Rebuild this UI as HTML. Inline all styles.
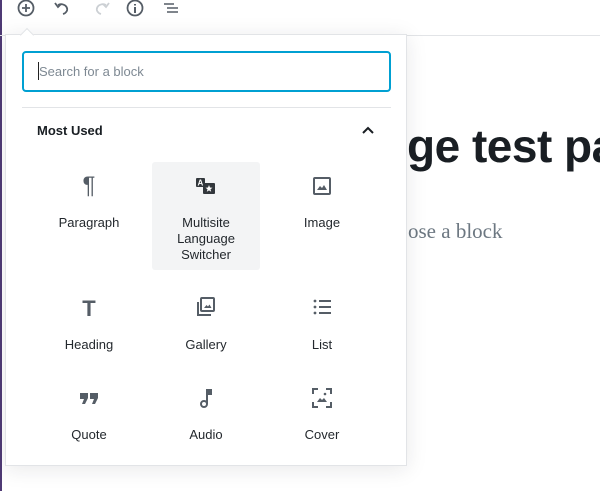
<!DOCTYPE html>
<html><head><style>
*{box-sizing:border-box;margin:0;padding:0}
body{width:600px;height:491px;overflow:hidden;background:#fff;font-family:"Liberation Sans",sans-serif;position:relative;color:#1e1e1e}
.abs{position:absolute}
.lbl{position:absolute;width:108px;text-align:center;font-size:13px;color:#23282d;line-height:16px}
.ic{position:absolute}
</style></head><body>
<div class="abs" style="left:0;top:0;width:2px;height:491px;background:#4f3a75"></div>
<div class="abs" style="left:0;top:35px;width:600px;height:1px;background:#e2e4e7"></div>
<!-- toolbar icons -->
<svg class="ic" style="left:16px;top:0" width="20" height="18" viewBox="0 0 20 18"><circle cx="10" cy="8" r="7.5" fill="none" stroke="#555d66" stroke-width="1.8"/><path d="M10 4v8M6 8h8" stroke="#555d66" stroke-width="1.8"/></svg>
<svg class="ic" style="left:54px;top:0" width="20" height="18" viewBox="0 0 20 18"><path d="M4 5 A6 5 0 1 1 9 14" fill="none" stroke="#555d66" stroke-width="1.8"/><path d="M1 3l3 4 3-3" fill="none" stroke="#555d66" stroke-width="1.8"/></svg>
<svg class="ic" style="left:90px;top:0" width="20" height="18" viewBox="0 0 20 18"><path d="M16 5 A6 5 0 1 0 11 14" fill="none" stroke="#ccd0d4" stroke-width="1.8"/><path d="M19 3l-3 4-3-3" fill="none" stroke="#ccd0d4" stroke-width="1.8"/></svg>
<svg class="ic" style="left:125px;top:0" width="20" height="18" viewBox="0 0 20 18"><circle cx="10" cy="8" r="7.5" fill="none" stroke="#555d66" stroke-width="1.8"/><path d="M10 7v6M10 4v1.5" stroke="#555d66" stroke-width="2"/></svg>
<svg class="ic" style="left:162px;top:0" width="20" height="18" viewBox="0 0 20 18"><path d="M2 4h10M5 8h11M5 12h11" stroke="#555d66" stroke-width="1.6"/></svg>
<!-- page content -->
<div class="abs" style="left:407px;top:119px;font-size:46px;font-weight:bold;color:#191e23;white-space:nowrap;letter-spacing:-0.5px">ge test pa</div>
<div class="abs" style="left:408px;top:219px;font-size:21px;font-family:'Liberation Serif',serif;color:#6c7781;white-space:nowrap">ose a block</div>
<!-- panel -->
<div class="abs" style="left:5px;top:34px;width:402px;height:432px;background:#fff;border:1px solid #e2e4e7;box-shadow:0 3px 20px rgba(25,30,35,.1)"></div>
<div class="abs" style="left:22px;top:30px;width:10px;height:10px;background:#fff;border-left:1px solid #e2e4e7;border-top:1px solid #e2e4e7;transform:rotate(45deg)"></div>
<div class="abs" style="left:22px;top:51px;width:369px;height:41px;border:2px solid #00a0d2;border-radius:4px"></div>
<div class="abs" style="left:38px;top:62px;width:1px;height:18px;background:#222"></div>
<div class="abs" style="left:39px;top:64px;font-size:13px;color:#7e8993">Search for a block</div>
<div class="abs" style="left:22px;top:107px;width:369px;height:1px;background:#e2e4e7"></div>
<div class="abs" style="left:37px;top:123px;font-size:13px;font-weight:bold;color:#191e23">Most Used</div>
<svg class="ic" style="left:361px;top:124px" width="14" height="12" viewBox="0 0 14 12"><path d="M2 9l5-5 5 5" fill="none" stroke="#191e23" stroke-width="2"/></svg>
<div class="abs" style="left:152px;top:162px;width:108px;height:108px;background:#f3f4f5;border-radius:3px"></div>
<!-- row1 icons -->
<div class="abs" style="left:77px;top:172px;width:24px;text-align:center;font-size:24px;color:#555d66">¶</div>
<svg class="ic" style="left:196px;top:178px" width="20" height="18" viewBox="0 0 20 18"><rect x="0" y="0" width="9" height="9" rx="1" fill="#32373c"/><text x="1.5" y="7.5" font-size="8" font-weight="bold" fill="#fff" font-family="Liberation Sans">A</text><rect x="7" y="5" width="12" height="11" rx="1" fill="#32373c"/><path d="M13 7l1 2.5 2.5.2-2 1.6.7 2.5-2.2-1.4-2.2 1.4.7-2.5-2-1.6 2.5-.2z" fill="#fff"/></svg>
<svg class="ic" style="left:313px;top:177px" width="18" height="18" viewBox="0 0 18 18"><rect x="1" y="1" width="16" height="16" rx="1" fill="none" stroke="#555d66" stroke-width="2"/><path d="M4 13l3-4 2 2 2-3 3 5z" fill="#555d66"/></svg>
<div class="lbl" style="left:35px;top:215px">Paragraph</div>
<div class="lbl" style="left:152px;top:215px">Multisite<br>Language<br>Switcher</div>
<div class="lbl" style="left:268px;top:215px">Image</div>
<!-- row2 -->
<div class="abs" style="left:78px;top:296px;width:22px;text-align:center;font-size:22px;font-weight:bold;color:#555d66">T</div>
<svg class="ic" style="left:196px;top:297px" width="20" height="20" viewBox="0 0 20 20"><rect x="5" y="1" width="13" height="13" rx="1" fill="none" stroke="#555d66" stroke-width="2"/><path d="M2 5v13h13" fill="none" stroke="#555d66" stroke-width="2"/><path d="M8 11l2.5-3 1.5 1.5 1.5-2 2 3.5z" fill="#555d66"/></svg>
<svg class="ic" style="left:313px;top:298px" width="20" height="18" viewBox="0 0 20 18"><circle cx="2" cy="3" r="1.4" fill="#555d66"/><circle cx="2" cy="9" r="1.4" fill="#555d66"/><circle cx="2" cy="15" r="1.4" fill="#555d66"/><path d="M6 3h12M6 9h12M6 15h12" stroke="#555d66" stroke-width="2"/></svg>
<div class="lbl" style="left:35px;top:337px">Heading</div>
<div class="lbl" style="left:152px;top:337px">Gallery</div>
<div class="lbl" style="left:268px;top:337px">List</div>
<!-- row3 -->
<svg class="ic" style="left:79px;top:392px" width="20" height="14" viewBox="0 0 20 14"><path d="M1 1h8v5l-3 6H3l2-5H1z" fill="#555d66"/><path d="M11 1h8v5l-3 6h-3l2-5h-4z" fill="#555d66"/></svg>
<svg class="ic" style="left:199px;top:388px" width="14" height="20" viewBox="0 0 14 20"><path d="M8 16V2h4v4H9" fill="none" stroke="#555d66" stroke-width="2"/><rect x="9" y="1" width="4" height="4" fill="#555d66"/><circle cx="5" cy="16" r="3" fill="none" stroke="#555d66" stroke-width="2"/></svg>
<svg class="ic" style="left:312px;top:388px" width="20" height="20" viewBox="0 0 20 20"><path d="M1 6V1h5M14 1h5v5M19 14v5h-5M6 19H1v-5" fill="none" stroke="#555d66" stroke-width="2"/><circle cx="13" cy="6" r="1.3" fill="#555d66"/><path d="M5 14l3-4 2 2 2-2 3 4z" fill="#555d66"/></svg>
<div class="lbl" style="left:35px;top:427px">Quote</div>
<div class="lbl" style="left:152px;top:427px">Audio</div>
<div class="lbl" style="left:268px;top:427px">Cover</div>
</body></html>
